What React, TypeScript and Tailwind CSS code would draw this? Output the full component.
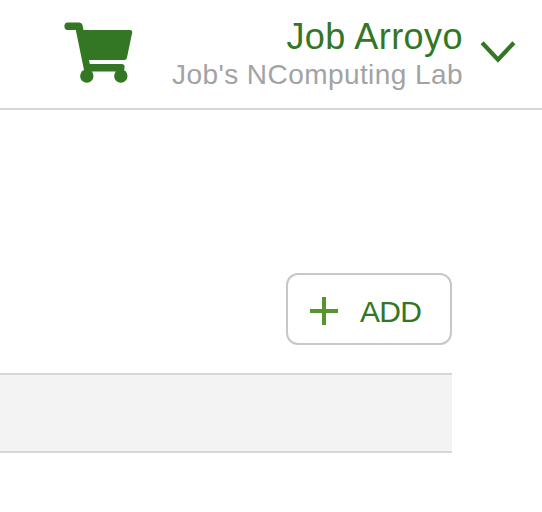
function CartIcon() {
  return (
    <svg className="mt-[22px] ml-16 h-[62px] w-[69px] shrink-0" viewBox="0 0 69 62" fill="#337623">
      <path d="M3.600.4H15c1.700 0 3.100 1 3.500 2.800L19.500 8H66c1.700 0 2.500 1 2.200 2.500L63 35.500c-.4 1.700-1.200 2.500-2.800 2.500H25l.8 4H57.500c2.300 0 3.500 1.300 3.100 3.200l-.7 4.200H20.300L11.800 8H3.600C1.500 8 .4 6.500.4 4.200S1.500.4 3.600.4z" />
      <circle cx="22.800" cy="54" r="6.700" />
      <circle cx="56.800" cy="54" r="6.700" />
    </svg>
  );
}

function Header() {
  return (
    <header className="flex h-[110px] items-start border-b-2 border-[#d7d7d7] pr-[26px]">
      <CartIcon />
      <div className="ml-auto pt-[17px] text-right whitespace-nowrap">
        <div className="text-[36px] leading-10 tracking-[0.45px] text-[#337623]">Job Arroyo</div>
        <div className="mt-0.5 text-[28px] leading-8 tracking-[0.43px] text-[#a3a3a3]">Job's NComputing Lab</div>
      </div>
      <svg className="mt-10 ml-[17px] h-6 w-9 shrink-0" viewBox="0 0 36 24" fill="none" stroke="#337623" strokeWidth="4.200">
        <path d="M2.100 2.700 18 19.600 33.900 2.700" />
      </svg>
    </header>
  );
}

export default function App() {
  return (
    <div className="h-[512px] w-[542px] overflow-hidden bg-white font-['Liberation_Sans',Arial,sans-serif]">
      <Header />
      <main className="w-[452px] pt-[163px]">
        <button className="ml-auto flex h-[72px] w-[166px] items-center rounded-xl border-2 border-[#c7c7c7] bg-white pt-1 pl-[22px] text-[#337623]">
          <svg className="h-7 w-7" viewBox="0 0 28 28" fill="#59932f">
            <path d="M12 0h4v12h12v4H16v12h-4V16H0v-4h12z" />
          </svg>
          <span className="ml-[22px] pt-0.5 text-[30px] leading-8 tracking-[-0.7px]">ADD</span>
        </button>
        <div className="mt-7 h-20 border-y-2 border-[#d7d7d7] bg-[#f3f3f3]" />
      </main>
    </div>
  );
}
